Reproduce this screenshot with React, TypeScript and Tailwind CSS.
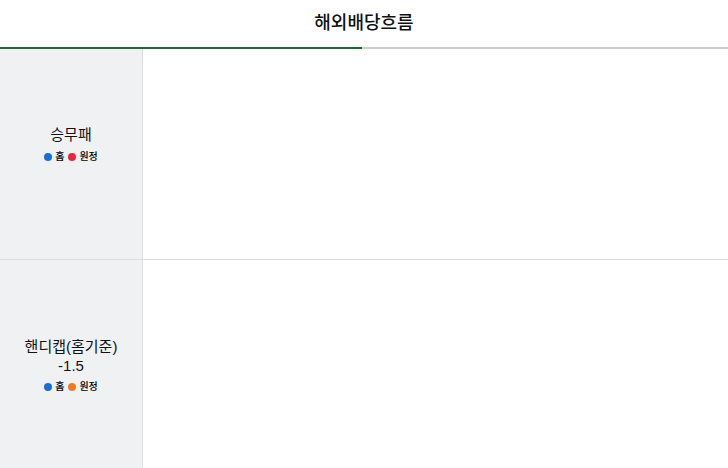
const Legend = ({ away }: { away: string }) => {
  return (
    <div className="mt-[6px] flex items-center justify-center gap-[3px] text-[10px] font-medium leading-[12px] text-black">
      <span className="inline-block h-[8px] w-[8px] rounded-full bg-[#1a6ed8]"></span>
      <span>홈</span>
      <span className={`ml-[1px] inline-block h-[8px] w-[8px] rounded-full ${away}`}></span>
      <span>원정</span>
    </div>
  );
};

const App = () => {
  return (
    <div
      className="w-[728px] h-[468px] overflow-hidden bg-white text-[#111]"
      style={{ fontFamily: '"Liberation Sans", "Noto Sans CJK KR", sans-serif' }}
    >
      <div className="h-[47px] flex items-center justify-center text-[18px] font-medium">
        해외배당흐름
      </div>
      <div className="flex h-[2px]">
        <div className="w-[362px] bg-[#1d6b34]"></div>
        <div className="flex-1 bg-[#cccccc]"></div>
      </div>
      <div className="flex h-[211px] border-b border-[#dddddd]">
        <div className="w-[143px] shrink-0 border-r border-[#dddddd] bg-[#f0f1f3] flex flex-col items-center justify-center pb-5">
          <div className="text-[15px] leading-[20px]">승무패</div>
          <Legend away="bg-[#e8263d]" />
        </div>
        <div className="flex-1"></div>
      </div>
      <div className="flex h-[210px]">
        <div className="w-[143px] shrink-0 border-r border-[#dddddd] bg-[#f0f1f3] flex flex-col items-center justify-center">
          <div className="text-[15px] leading-[19px] text-center">
            핸디캡(홈기준)
            <br />
            -1.5
          </div>
          <Legend away="bg-[#f07a22]" />
        </div>
        <div className="flex-1"></div>
      </div>
    </div>
  );
};

export default App;
